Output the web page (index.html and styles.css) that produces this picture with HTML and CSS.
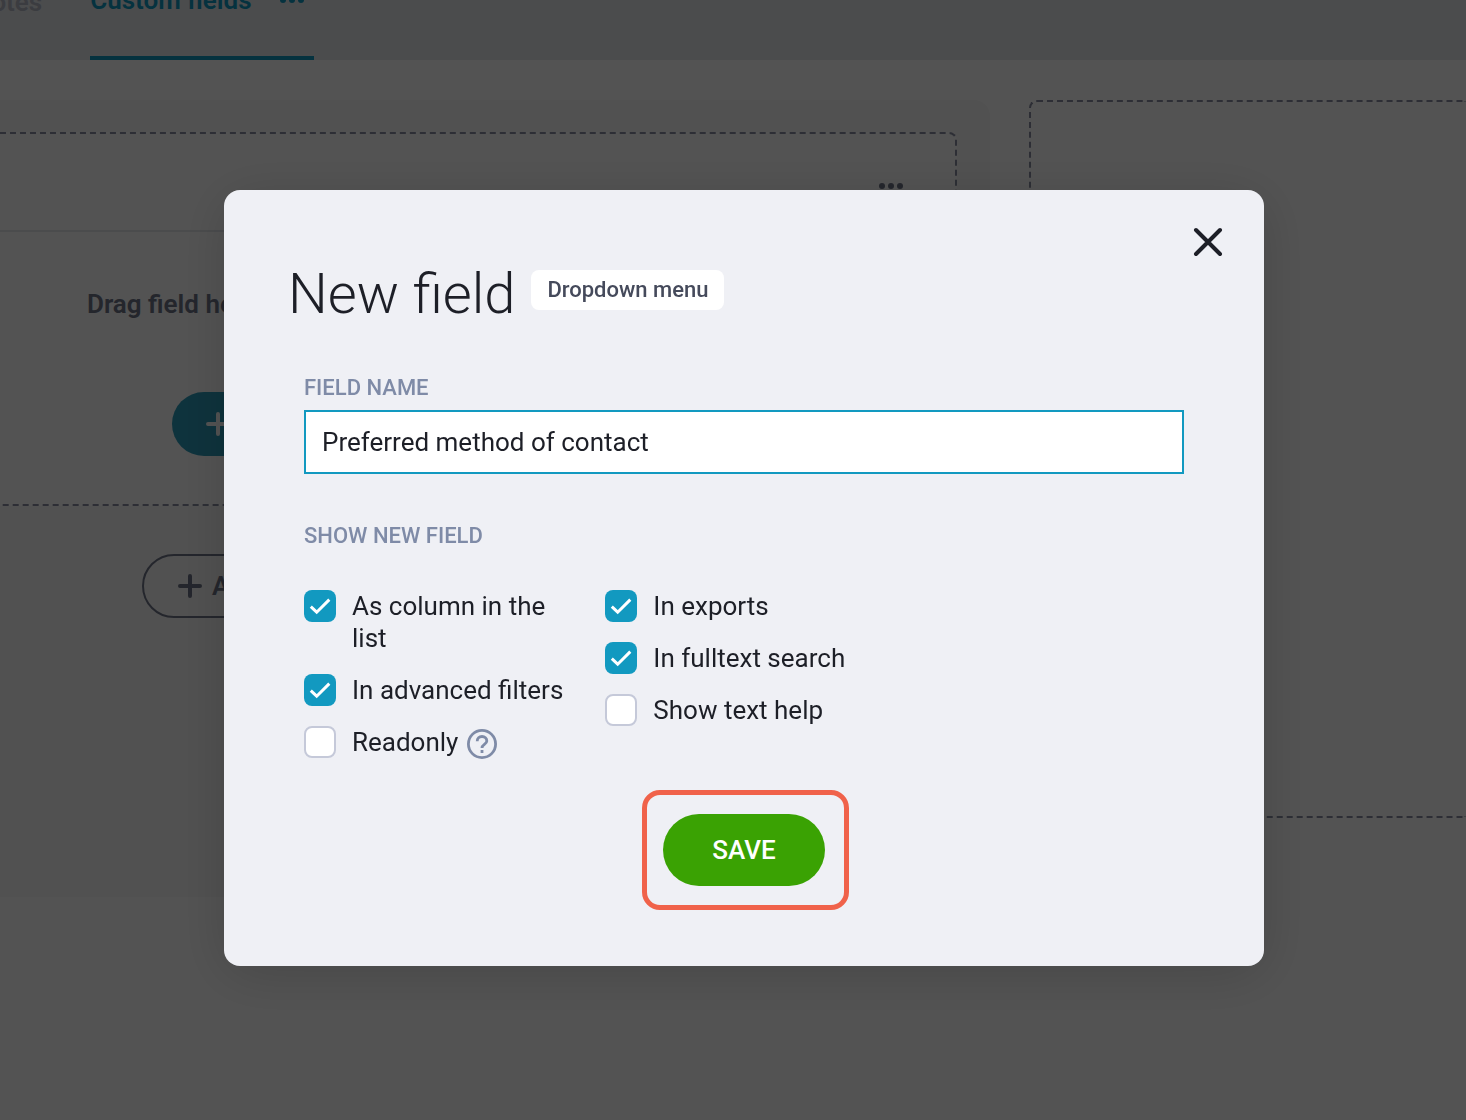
FILE: index.html
```html
<!DOCTYPE html>
<html lang="en">
<head>
  <meta charset="UTF-8">
  <meta name="viewport" content="width=device-width, initial-scale=1">
  <title>New field</title>
  <link rel="stylesheet" href="styles.css">
</head>
<body>
  <nav class="tabs">
    <a href="#" class="tab">Notes</a>
    <a href="#" class="tab active">Custom fields
      <svg class="dots" width="24" height="6" viewBox="0 0 24 6"><circle cx="3" cy="3" r="3"/><circle cx="12" cy="3" r="3"/><circle cx="21" cy="3" r="3"/></svg>
    </a>
  </nav>

  <main class="board">
    <section class="panel">
      <div class="group">
        <div class="group-header">
          <svg class="dots" width="24" height="6" viewBox="0 0 24 6"><circle cx="3" cy="3" r="3"/><circle cx="12" cy="3" r="3"/><circle cx="21" cy="3" r="3"/></svg>
        </div>
        <div class="group-body">
          <p>Drag field here</p>
          <button type="button" class="pill pill-primary">
            <svg width="24" height="24" viewBox="0 0 24 24"><path d="M12 2v20M2 12h20"/></svg>
            Add
          </button>
        </div>
      </div>
      <button type="button" class="pill pill-outline">
        <svg width="24" height="24" viewBox="0 0 24 24"><path d="M12 2v20M2 12h20"/></svg>
        Add
      </button>
    </section>
    <section class="drop-zone"></section>
  </main>

  <div class="overlay">
    <div class="modal" role="dialog" aria-labelledby="modal-title">
      <button type="button" class="close" aria-label="Close">
        <svg width="32" height="32" viewBox="0 0 32 32"><path d="M4 4l24 24M28 4L4 28"/></svg>
      </button>

      <header class="modal-header">
        <h1 id="modal-title">New field</h1>
        <span class="tag">Dropdown menu</span>
      </header>

      <form class="modal-form">
        <label class="caption" for="fieldName">FIELD NAME</label>
        <input type="text" class="text-input" id="fieldName" name="fieldName" value="Preferred method of contact">

        <h2 class="caption">SHOW NEW FIELD</h2>
        <div class="options">
          <div class="options-column">
            <label class="option"><input type="checkbox" name="column" checked><span>As column in the list</span></label>
            <label class="option"><input type="checkbox" name="filters" checked><span>In advanced filters</span></label>
            <label class="option"><input type="checkbox" name="readonly"><span>Readonly</span>
              <svg class="help" width="32" height="32" viewBox="0 0 32 32">
                <circle cx="16" cy="16" r="13.6"/>
                <path d="M11.2 13.2c0-2.8 2-4.7 4.8-4.7s4.8 1.9 4.8 4.4c0 3.4-4.8 3.6-4.8 7"/>
                <path d="M16 22v3"/>
              </svg>
            </label>
          </div>
          <div class="options-column">
            <label class="option"><input type="checkbox" name="exports" checked><span>In exports</span></label>
            <label class="option"><input type="checkbox" name="search" checked><span>In fulltext search</span></label>
            <label class="option"><input type="checkbox" name="help"><span>Show text help</span></label>
          </div>
        </div>

        <div class="actions">
          <div class="highlight">
            <button type="submit" class="save">SAVE</button>
          </div>
        </div>
      </form>
    </div>
  </div>
</body>
</html>
```

FILE: styles.css
```css
* {
  box-sizing: border-box;
}
body {
  margin: 0;
  min-height: 100vh;
  overflow: hidden;
  font-family: Roboto, "Liberation Sans", sans-serif;
  font-size: 26px;
  line-height: 32px;
  color: #1d1f27;
  background: #fff;
}
h1, h2, p {
  margin: 0;
}
button, input {
  font: inherit;
}
svg {
  flex: none;
}

/* Tabs */
.tabs {
  display: flex;
  align-items: flex-end;
  gap: 48px;
  height: 60px;
  background: #e6e8ed;
  overflow: hidden;
}
.tab {
  flex: none;
  display: flex;
  align-items: center;
  gap: 28px;
  height: 76px;
  padding-bottom: 40px;
  margin-left: -27px;
  font-weight: 600;
  color: #b4b8c6;
  text-decoration: none;
}
.tab.active {
  width: 224px;
  margin-left: 0;
  color: #1299c0;
  border-bottom: 4px solid #1299c0;
}
.dots {
  fill: currentColor;
}

/* Board */
.board {
  display: flex;
  align-items: flex-start;
  gap: 39px;
  padding-top: 40px;
}
.panel {
  flex: none;
  width: 990px;
  height: 797px;
  padding: 32px 33px 0 0;
  background: #f8f8f8;
  border-radius: 0 16px 16px 0;
}
.group {
  height: 374px;
  background: #fdfdfd;
  border: 2px dashed #8a8fa3;
  border-left: none;
  border-radius: 0 8px 8px 0;
  color: #6f7589;
}
.group-header {
  display: flex;
  justify-content: flex-end;
  align-items: center;
  height: 98px;
  padding: 8px 52px 0 0;
  border-bottom: 2px solid #e6e8ed;
}
.group-body {
  display: flex;
  flex-direction: column;
  align-items: flex-start;
  gap: 72px;
  padding: 56px 0 0 87px;
  font-weight: 600;
}
.pill {
  display: flex;
  align-items: center;
  gap: 10px;
  height: 64px;
  padding: 0 34px;
  border: none;
  border-radius: 32px;
  font-weight: 600;
}
.pill path {
  fill: none;
  stroke: currentColor;
  stroke-width: 4;
  stroke-linecap: round;
}
.pill-primary {
  margin-left: 85px;
  color: #fff;
  background: #2d9cba;
}
.pill-outline {
  margin: 48px 0 0 142px;
  color: #6f7589;
  background: none;
  border: 2px solid #6f7589;
}
.drop-zone {
  flex: 1;
  height: 718px;
  border: 2px dashed #8a8fa3;
  border-right: none;
  border-radius: 8px 0 0 8px;
}

/* Modal */
.overlay {
  position: fixed;
  inset: 0;
  padding: 190px 0 0 22px;
  background: rgba(0, 0, 0, 0.675);
}
.modal {
  position: relative;
  max-width: 1040px;
  margin: 0 auto;
  padding: 72px 80px 80px;
  background: #eff0f5;
  border-radius: 16px;
  box-shadow: 0 8px 56px rgba(0, 0, 0, 0.16);
}
.close {
  position: absolute;
  top: 36px;
  right: 40px;
  width: 32px;
  height: 32px;
  padding: 0;
  border: none;
  background: none;
  cursor: pointer;
}
.close path {
  fill: none;
  stroke: #1d1f27;
  stroke-width: 4;
  stroke-linecap: round;
}
.modal-header {
  display: flex;
  align-items: flex-start;
  gap: 16px;
  margin-left: -16px;
}
.modal-header h1 {
  font-size: 56px;
  line-height: 64px;
  font-weight: 300;
}
.tag {
  margin-top: 8px;
  padding: 4px 16px;
  font-size: 22px;
  font-weight: 500;
  color: #454a5b;
  background: #fff;
  border-radius: 8px;
}
.modal-form {
  padding-top: 48px;
}
.caption {
  display: block;
  font-size: 22px;
  line-height: 28px;
  font-weight: 500;
  color: #7f8ba7;
}
.text-input {
  display: block;
  width: 100%;
  height: 64px;
  margin: 8px 0 48px;
  padding: 0 16px;
  color: #1d1f27;
  background: #fff;
  border: 2px solid #1299c0;
  outline: none;
}
.options {
  display: grid;
  grid-template-columns: repeat(3, 1fr);
  gap: 24px;
  margin-top: 40px;
}
.options-column {
  display: flex;
  flex-direction: column;
  gap: 20px;
}
.option {
  display: flex;
  align-items: flex-start;
}
.option input {
  appearance: none;
  flex: none;
  width: 32px;
  height: 32px;
  margin: 0 16px 0 0;
  background: #fff;
  border: 2px solid #c5c9d9;
  border-radius: 8px;
}
.option input:checked {
  background: #1299c0 url("data:image/svg+xml,%3Csvg xmlns='http://www.w3.org/2000/svg' viewBox='0 0 32 32'%3E%3Cpath d='M6.8 16.6l5.9 5.6L25.3 9.6' fill='none' stroke='white' stroke-width='3'/%3E%3C/svg%3E") center / 32px 32px;
  border: none;
}
.help {
  margin: 2px 0 -2px 8px;
  fill: none;
  stroke: #7f8ba7;
  stroke-width: 2.8;
}
.actions {
  display: flex;
  justify-content: center;
  margin-top: 56px;
}
.highlight {
  position: relative;
}
.highlight::after {
  content: "";
  position: absolute;
  inset: -24px -24px -24px -21px;
  border: 5px solid #f0624a;
  border-radius: 18px;
  pointer-events: none;
}
.save {
  display: block;
  height: 72px;
  padding: 0 49px;
  font-weight: 500;
  color: #fff;
  background: #3aa203;
  border: none;
  border-radius: 36px;
  cursor: pointer;
}
```
